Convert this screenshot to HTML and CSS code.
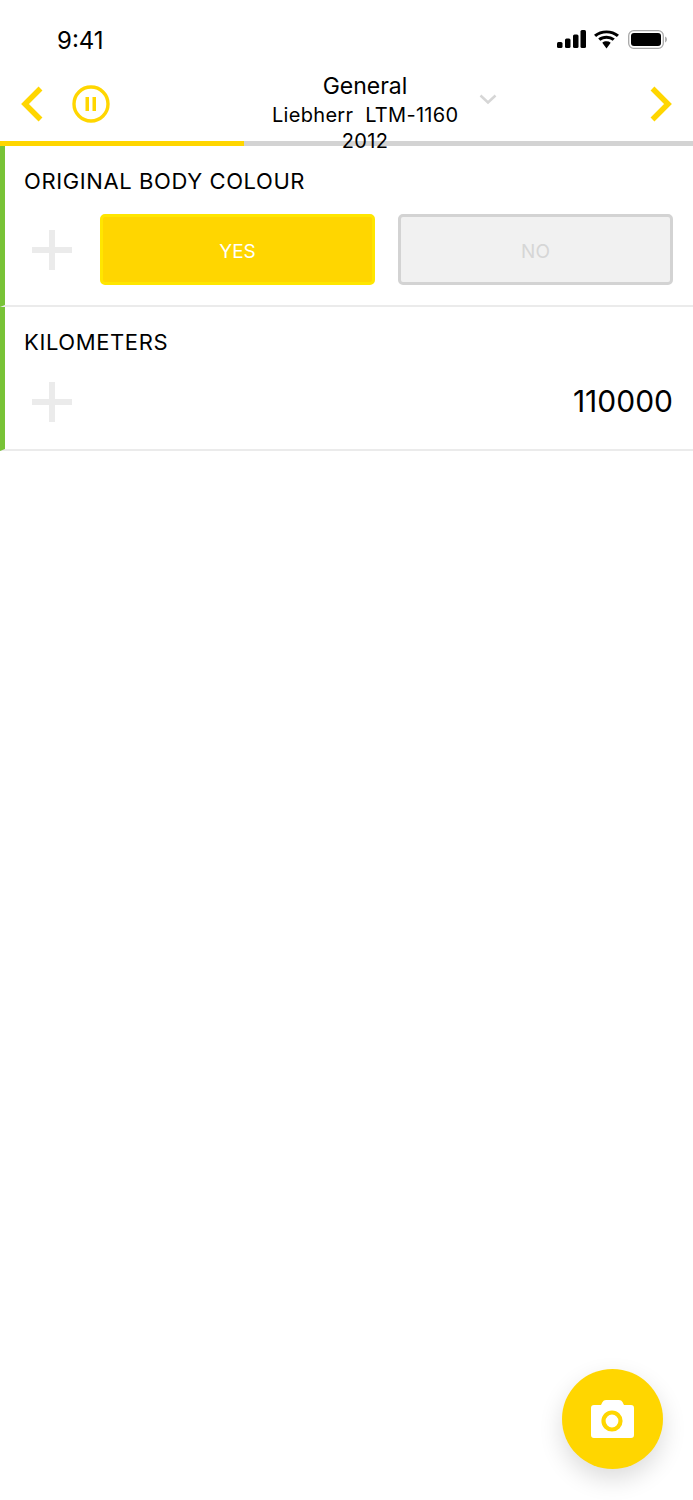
FILE: index.html
```html
<!DOCTYPE html>
<html lang="en">
    <head>
        <meta charset="UTF-8">
        <meta name="viewport" content="width=device-width, initial-scale=1.0">
        <title>General</title>
        <link rel="stylesheet" href="styles.css">
    </head>
    <body>
        <div class="status">
            <span class="time">9:41</span>
            <svg class="signal" width="29" height="18" viewBox="0 0 29 18">
                <rect x="0" y="12" width="5.500" height="6" rx="1.500"/>
                <rect x="8" y="8.500" width="5.500" height="9.500" rx="1.500"/>
                <rect x="16" y="4.500" width="5.500" height="13.500" rx="1.500"/>
                <rect x="23.500" y="0" width="5.500" height="18" rx="1.500"/>
            </svg>
            <svg class="wifi" width="25" height="19" viewBox="1.700 0 22.600 19" preserveAspectRatio="none">
                <path d="M13 3.200c3.600 0 6.900 1.400 9.400 3.700l1.900-2.200A17 17 0 0 0 13 .4 17 17 0 0 0 1.700 4.700l1.900 2.200A14 14 0 0 1 13 3.200z"/>
                <path d="M13 8.700c2.100 0 4.100.8 5.600 2.100l1.900-2.200A11.300 11.300 0 0 0 13 5.800c-2.900 0-5.500 1-7.500 2.800l1.900 2.200A8.500 8.500 0 0 1 13 8.700z"/>
                <path d="M13 11.300c-1.500 0-2.800.5-3.800 1.400L13 18.600l3.800-5.900a5.700 5.700 0 0 0-3.800-1.400z"/>
            </svg>
            <svg class="battery" width="40" height="19" viewBox="0 0 40 19">
                <rect x=".7" y=".7" width="34.600" height="17.600" rx="5" fill="none" stroke="#a8a8a8" stroke-width="1.300"/>
                <rect x="3" y="3" width="30" height="13" rx="3"/>
                <path d="M37 6.500c1.200.4 2 1.600 2 3s-.8 2.600-2 3z" fill="#b0b0b0"/>
            </svg>
        </div>

        <header>
            <svg class="nav-arrow" width="24" height="36" viewBox="0 0 24 36">
                <path d="M20.500 2.500 5 18l15.500 15.500" fill="none" stroke="#ffd600" stroke-width="5.500"/>
            </svg>
            <svg class="pause" width="38" height="38" viewBox="0 0 38 38">
                <circle cx="19" cy="19" r="17" fill="none" stroke="#ffd600" stroke-width="3.400"/>
                <rect x="13.500" y="12" width="3.500" height="14" fill="#ffd600"/>
                <rect x="20.500" y="12" width="3.500" height="14" fill="#ffd600"/>
            </svg>
            <div class="heading">
                <h1>General</h1>
                <p>Liebherr  LTM-1160</p>
                <p>2012</p>
            </div>
            <svg class="caret" width="18" height="11" viewBox="0 0 18 11">
                <path d="M1.500 1.500 9 8.500l7.500-7" fill="none" stroke="#d6d6d6" stroke-width="2.500"/>
            </svg>
            <svg class="nav-arrow next" width="24" height="36" viewBox="0 0 24 36">
                <path d="M3.500 2.500 19 18 3.500 33.500" fill="none" stroke="#ffd600" stroke-width="5.500"/>
            </svg>
        </header>
        <div class="progress"><div class="progress-fill"></div></div>

        <ul class="questions">
            <li class="question">
                <h2>ORIGINAL BODY COLOUR</h2>
                <div class="answer">
                    <span class="plus"></span>
                    <div class="choices">
                        <button class="choice active">YES</button>
                        <button class="choice">NO</button>
                    </div>
                </div>
            </li>
            <li class="question">
                <h2>KILOMETERS</h2>
                <div class="answer">
                    <span class="plus"></span>
                    <span class="value">110000</span>
                </div>
            </li>
        </ul>

        <button class="camera">
            <svg width="43" height="38" viewBox="0 0 43 38">
                <path d="M3 5h7l1.500-3Q12.500 0 15 0h13q2.500 0 3.500 2L33 5h7q3 0 3 3v27q0 3-3 3H3q-3 0-3-3V8q0-3 3-3z" fill="#fff"/>
                <circle cx="21" cy="21" r="8.500" fill="none" stroke="#ffd600" stroke-width="4.200"/>
            </svg>
        </button>
    </body>
</html>
```

FILE: styles.css
```css
:root{
    --yellow: #ffd600;
    --line: #ebebeb;
    --grey: #d3d3d3;
}
*{
    box-sizing: border-box;
}
body{
    font-family: Inter, "Liberation Sans", sans-serif;
    margin: 0;
    background: #fff;
    color: #000;
    height: 1500px;
    overflow: hidden;
}

.status{
    display: flex;
    align-items: center;
    height: 70px;
    padding: 10px 25px 0 57px;

    .time{
        font-size: 24px;
        margin-right: auto;
    }
    svg{
        margin-top: -2px;
    }
    .signal{
        margin-right: 8px;
    }
    .wifi{
        margin-right: 9px;
    }
}

header{
    display: flex;
    height: 71px;
    padding: 0 20px 4px;
    align-items: center;
}
.pause{
    margin-left: 28px;
    flex-shrink: 0;
}
.heading{
    width: 186px;
    margin-left: 162px;
    flex-shrink: 0;
    text-align: center;
    align-self: flex-start;
    position: relative;
    z-index: 1;

    h1{
        font-size: 23px;
        font-weight: 400;
        line-height: 30px;
        margin: 1px 0 1px;
    }
    p{
        font-size: 20px;
        letter-spacing: 0.3px;
        line-height: 26px;
        margin: 0;
        white-space: pre;
    }
}
.caret{
    margin: -8px 0 0 21px;
}
.next{
    margin-left: auto;
}

.progress{
    height: 5px;
    background: var(--grey);
}
.progress-fill{
    width: 244px;
    height: 100%;
    background: var(--yellow);
}

.questions{
    list-style: none;
    margin: 0;
    padding: 0;
}
.question{
    border-left: 5px solid #78c337;
    border-bottom: 2px solid var(--line);
    padding: 21px 20px 0 19px;

    h2{
        font-size: 22px;
        font-weight: 400;
        letter-spacing: 0.6px;
        line-height: 28px;
        margin: 0;
    }
}
.question:first-child{
    height: 161px;
}
.question:last-child{
    height: 144px;

    .answer{
        margin-top: 26px;
    }
}
.answer{
    display: flex;
    align-items: center;
    margin-top: 19px;
    padding-left: 8px;
}
.plus{
    width: 40px;
    height: 40px;
    flex-shrink: 0;
    background:
        linear-gradient(var(--line), var(--line)) center / 100% 6px no-repeat,
        linear-gradient(var(--line), var(--line)) center / 6px 100% no-repeat;
}
.choices{
    display: flex;
    flex: 1;
    gap: 23px;
    margin-left: 28px;
}
.choice{
    flex: 1;
    height: 71px;
    padding: 3px 0 0;
    font-family: inherit;
    font-size: 19px;
    border-radius: 5px;
    border: 3px solid var(--grey);
    background: #f1f1f1;
    color: #d6d6d6;

    &.active{
        border-color: #ffe600;
        background: var(--yellow);
        color: #fff;
    }
}
.value{
    margin: 0 0 2px auto;
    font-size: 30px;
}

.camera{
    position: absolute;
    left: 562px;
    top: 1369px;
    width: 101px;
    height: 100px;
    border: none;
    border-radius: 50%;
    background: var(--yellow);
    box-shadow: 0 10px 24px rgba(0, 0, 0, 0.14);
    display: flex;
    align-items: center;
    justify-content: center;
    padding: 0;
}
```
